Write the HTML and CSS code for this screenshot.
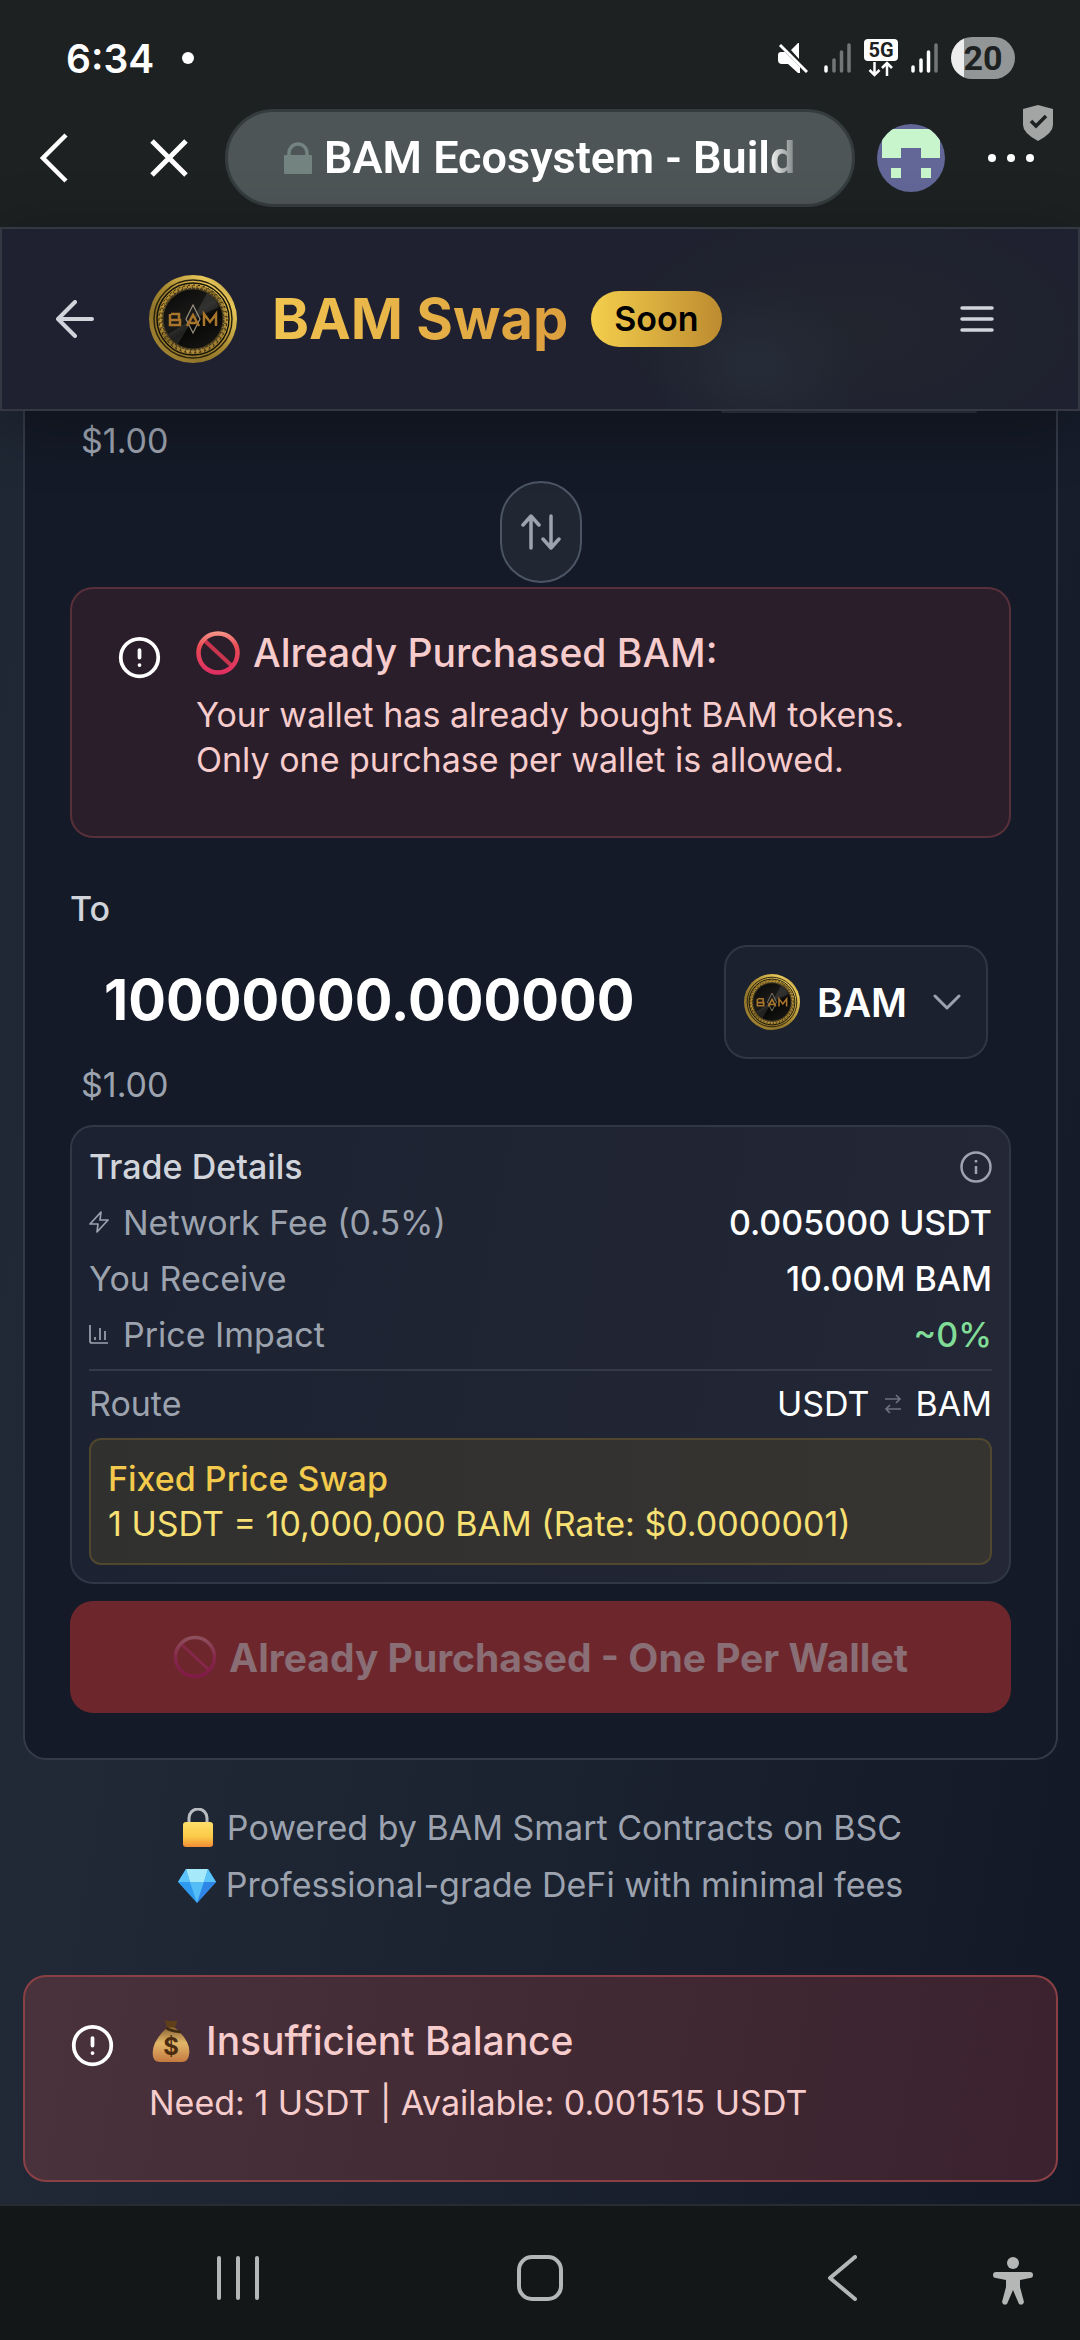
FILE: index.html
```html
<!DOCTYPE html>
<html lang="en">
<head>
<meta charset="utf-8">
<meta name="viewport" content="width=device-width, initial-scale=1">
<title>BAM Swap</title>
<link rel="stylesheet" href="styles.css">
</head>
<body>
<svg class="defs" aria-hidden="true">
  <defs>
    <linearGradient id="gold" x1="0" y1="0" x2="1" y2="1">
      <stop offset="0" stop-color="#9a7826"/><stop offset=".3" stop-color="#c79a35"/>
      <stop offset=".45" stop-color="#7d6420"/><stop offset=".7" stop-color="#b8913a"/><stop offset="1" stop-color="#8d6f24"/>
    </linearGradient>
    <linearGradient id="rim" x1="0" y1="1" x2="1" y2="0">
      <stop offset="0" stop-color="#b08f38"/><stop offset=".3" stop-color="#8f742a"/>
      <stop offset=".5" stop-color="#a5862f"/><stop offset=".8" stop-color="#e8c75a"/><stop offset="1" stop-color="#8c7028"/>
    </linearGradient>
    <linearGradient id="face" x1=".2" y1="0" x2=".8" y2="1">
      <stop offset="0" stop-color="#0a0a0a"/><stop offset=".45" stop-color="#1b1b1a"/>
      <stop offset=".6" stop-color="#080807"/><stop offset="1" stop-color="#161614"/>
    </linearGradient>
    <linearGradient id="ban" gradientUnits="userSpaceOnUse" x1="0" y1="0" x2="0" y2="44">
      <stop offset="0" stop-color="#f79a8c"/><stop offset=".35" stop-color="#ea4a55"/><stop offset="1" stop-color="#df2d63"/>
    </linearGradient>
    <linearGradient id="ban-dim" gradientUnits="userSpaceOnUse" x1="0" y1="0" x2="0" y2="44">
      <stop offset="0" stop-color="#8f5560"/><stop offset=".5" stop-color="#85284a"/><stop offset="1" stop-color="#801848"/>
    </linearGradient>
    <linearGradient id="lockbody" x1="0" y1="0" x2="0" y2="1">
      <stop offset="0" stop-color="#ffe06a"/><stop offset=".6" stop-color="#fbc947"/><stop offset="1" stop-color="#f08c34"/>
    </linearGradient>
    <linearGradient id="bag" x1="0" y1="0" x2="0" y2="1">
      <stop offset="0" stop-color="#8a6432"/><stop offset=".45" stop-color="#e2b669"/><stop offset="1" stop-color="#c47a40"/>
    </linearGradient>
    <symbol id="coin" viewBox="0 0 88 88">
      <circle cx="44" cy="44" r="44" fill="url(#rim)"/>
      <circle cx="44" cy="44" r="39" fill="none" stroke="#2b230d" stroke-width="1.500"/>
      <circle cx="44" cy="44" r="36" fill="none" stroke="#15120a" stroke-width="1.500"/>
      <circle cx="44" cy="44" r="34" fill="#4a3c18"/>
      <g fill="none">
        <circle cx="44" cy="44" r="33" stroke="url(#gold)" stroke-width="3" stroke-dasharray="4 1"/>
        <circle cx="44" cy="44" r="31" stroke="#b9ab86" stroke-width="1" stroke-dasharray="1 3"/>
        <circle cx="44" cy="44" r="34" stroke="#1d190d" stroke-width="1" stroke-dasharray="2 3"/>
      </g>
      <circle cx="44" cy="44" r="29.500" fill="url(#face)"/>
      <path d="M44 44 58 18A30 30 0 0 1 70 32ZM44 44 29 69A30 30 0 0 1 19 59Z" fill="#fff" opacity=".1"/>
      <path d="M44 30 51 44 44 58 37 44Z" fill="none" stroke="#9a9180" stroke-width="1.200"/>
      <g fill="none" stroke="#a8752a" stroke-width="2.500"><path d="M21 39V50H31V45H21M22 39H30V45M55 51V39L61 47 67 39V51M38 51 44 40 50 51M41 48H47"/></g>
    </symbol>
    <symbol id="warn" viewBox="0 0 24 24"><g fill="none" stroke="currentColor" stroke-width="2" stroke-linecap="round"><circle cx="12" cy="12" r="10"/><path d="M12 8V12M12 16H12.010"/></g></symbol>
  </defs>
</svg>

<header class="system">
  <div class="status">
    <span class="clock">6:34</span><span class="dot"></span>
    <div class="status-icons">
      <svg class="mute" viewBox="0 0 30 30"><path d="M0 12Q0 9 3 9H7L22 24V30H20L10 21H4Q0 21 0 17ZM13 7 20 0H21V16Z" fill="#fff"/><path d="M2 2 29 29" stroke="#fff" stroke-width="3"/></svg>
      <svg class="signal" viewBox="0 0 27 30"><g stroke="#fff" stroke-width="3.500" stroke-linecap="round"><path d="M2 24V28"/><path d="M10 17V28M17.500 9V28M25 2V28" opacity=".38"/></g></svg>
      <svg class="net" viewBox="0 0 34 38"><rect x="0" y="0" width="34" height="22" rx="4" fill="#fff"/><text x="17" y="18" text-anchor="middle" class="net-text">5G</text><path d="M10.500 23V35M5.500 31 10.500 36 15.500 31M23 37V25M18 29 23 24 28 29" fill="none" stroke="#fff" stroke-width="2.500"/></svg>
      <svg class="signal" viewBox="0 0 27 30"><g stroke="#fff" stroke-width="3.500" stroke-linecap="round"><path d="M2 24V28M10 17V28M17.500 9V28"/><path d="M25 2V28" opacity=".38"/></g></svg>
      <span class="battery">20</span>
    </div>
  </div>
  <nav class="browser" aria-label="Browser">
    <button class="icon-btn back" aria-label="Back"><svg width="28" height="50" viewBox="0 0 28 50"><path d="M26 2 3 25 26 48" fill="none" stroke="#fff" stroke-width="4.500"/></svg></button>
    <button class="icon-btn close" aria-label="Stop"><svg width="38" height="38" viewBox="0 0 38 38"><path d="M2 2 36 36M36 2 2 36" stroke="#fff" stroke-width="5"/></svg></button>
    <button class="address"><svg width="28" height="32" viewBox="0 0 28 32"><path d="M5 14V11A9 9 0 0 1 23 11V14" fill="none" stroke="#728380" stroke-width="3.500"/><rect y="13" width="28" height="19" rx="1" fill="#728380"/></svg><span class="site">BAM Ecosystem - Build</span></button>
    <button class="icon-btn avatar" aria-label="Account"><svg width="68" height="68" viewBox="0 0 68 68"><defs><clipPath id="round"><circle cx="34" cy="34" r="34"/></clipPath></defs><g clip-path="url(#round)"><path d="M0 0H68V68H0Z" fill="#626797"/><path d="M5 5H63V34H44V24H24V34H5ZM14 44H24V54H14ZM44 44H54V54H44Z" fill="#c8f5cb"/></g></svg></button>
    <button class="icon-btn more" aria-label="More"><svg width="48" height="10" viewBox="0 0 48 10"><g fill="#fff"><circle cx="5" cy="5" r="4"/><circle cx="24" cy="5" r="4"/><circle cx="43" cy="5" r="4"/></g></svg><svg class="shield" viewBox="0 0 30 36"><path d="M15 0 30 4V20Q30 28 15 36 0 28 0 20V4Z" fill="#a3a4a4"/><path d="M8 16 13 21 23 11" fill="none" stroke="#1d2122" stroke-width="3.500"/></svg></button>
  </nav>
</header>

<header class="app-bar">
  <button class="icon-btn" aria-label="Go back"><svg class="arrow" viewBox="0 0 38 38"><path d="M36 19H3M19 2 2 19 19 36" fill="none" stroke="#d1d5db" stroke-width="4" stroke-linecap="round" stroke-linejoin="round"/></svg></button>
  <svg class="logo"><use href="#coin"/></svg>
  <h1>BAM Swap</h1>
  <span class="badge">Soon</span>
  <button class="icon-btn menu" aria-label="Menu"><svg width="34" height="28" viewBox="0 0 34 28"><path d="M2 3H32M2 14H32M2 25H32" stroke="#d1d5db" stroke-width="3.500" stroke-linecap="round"/></svg></button>
</header>

<main>
  <section class="card">
    <div class="from-edge"></div>
    <p class="usd from-usd">$1.00</p>
    <button class="flip" aria-label="Switch tokens"><svg width="40" height="36" viewBox="0 0 40 36"><path d="M10 34V3M2 11 10 2 18 11M30 2V33M22 25 30 34 38 25" fill="none" stroke="#9ca3af" stroke-width="3.500" stroke-linecap="round" stroke-linejoin="round"/></svg></button>
    <div class="alert" role="alert">
      <svg class="warn"><use href="#warn"/></svg>
      <div>
        <h2><svg class="emoji" viewBox="0 0 44 44"><path d="M8 9 36 35" stroke="#c9354f" stroke-width="4"/><circle cx="22" cy="22" r="19.500" fill="none" stroke="url(#ban)" stroke-width="4.500"/></svg>Already Purchased BAM:</h2>
        <p>Your wallet has already bought BAM tokens. Only one purchase per wallet is allowed.</p>
      </div>
    </div>
    <label class="to" for="amount">To</label>
    <div class="amount-row">
      <input id="amount" value="10000000.000000" readonly>
      <button class="token"><svg class="coin-sm"><use href="#coin"/></svg>BAM<svg class="chev" viewBox="0 0 28 16"><path d="M2 2 14 14 26 2" fill="none" stroke="#9ca3af" stroke-width="3" stroke-linecap="round" stroke-linejoin="round"/></svg></button>
    </div>
    <p class="usd">$1.00</p>
    <div class="details">
      <div class="row head"><h3>Trade Details</h3><svg width="32" height="32" viewBox="0 0 32 32"><circle cx="16" cy="16" r="14.500" fill="none" stroke="#9ca3af" stroke-width="2.500"/><path d="M16 15V23M16 9V11.500" stroke="#9ca3af" stroke-width="2.500"/></svg></div>
      <div class="row"><span><svg class="mini" viewBox="0 0 20 22"><path d="M12 1 1 13H9L8 21 19 9H11Z" fill="none" stroke="#9ca3af" stroke-width="1.700" stroke-linejoin="round"/></svg>Network Fee (0.5%)</span><b>0.005000 USDT</b></div>
      <div class="row"><span>You Receive</span><b>10.00M BAM</b></div>
      <div class="row"><span><svg class="mini" viewBox="0 0 20 22"><path d="M1 2V18Q1 20 3 20H19M6 14V17M11 5V17M16 8V17" fill="none" stroke="#9ca3af" stroke-width="1.700"/></svg>Price Impact</span><b class="green">~0%</b></div>
      <div class="row route"><span>Route</span><span class="pair">USDT<svg width="18" height="20" viewBox="0 0 18 20"><path d="M1 5H16M12 1 16 5 12 9M17 15H2M6 11 2 15 6 19" fill="none" stroke="#6b7280" stroke-width="1.700"/></svg>BAM</span></div>
      <div class="rate"><strong>Fixed Price Swap</strong><p>1 USDT = 10,000,000 BAM (Rate: $0.0000001)</p></div>
    </div>
    <button class="buy" disabled><svg class="emoji" viewBox="0 0 44 44"><path d="M8 9 36 35" stroke="#85284a" stroke-width="3"/><circle cx="22" cy="22" r="19.500" fill="none" stroke="url(#ban-dim)" stroke-width="3.500"/></svg>Already Purchased - One Per Wallet</button>
  </section>

  <footer class="notes">
    <p><svg class="note-icon" viewBox="0 0 38 40"><path d="M10 16V10A9 9 0 0 1 28 10V16" fill="none" stroke="#b9bcc0" stroke-width="3"/><rect x="4" y="14" width="30" height="25" rx="3" fill="url(#lockbody)"/></svg>Powered by BAM Smart Contracts on BSC</p>
    <p><svg class="note-icon" viewBox="0 0 38 40"><path d="M8 4H30L38 17 19 38 0 17Z" fill="#2f9bf0"/><path d="M8 4 12 17H26L30 4 19 4Z" fill="#a5e9fb"/><path d="M0 17H12L8 4ZM26 17H38L30 4Z" fill="#5cc4f8"/><path d="M12 17H26L19 38Z" fill="#55bdf5"/><path d="M26 17H38L19 38Z" fill="#2f86e6"/></svg>Professional-grade DeFi with minimal fees</p>
  </footer>

  <div class="alert strong" role="alert">
    <svg class="warn"><use href="#warn"/></svg>
    <div>
      <h2><svg class="emoji" viewBox="0 0 44 48"><path d="M15 1Q22 4 29 1L26 11H18Z" fill="#604018"/><path d="M17 10Q22 8 27 10 43 24 42 37 41 47 34 47H10Q2 47 2 37 2 24 17 10Z" fill="url(#bag)"/><path d="M17 10Q24 14 33 14" fill="none" stroke="#3f2a12" stroke-width="3"/><text x="22" y="39" text-anchor="middle" class="bag-text">$</text></svg>Insufficient Balance</h2>
      <p>Need: 1 USDT | Available: 0.001515 USDT</p>
    </div>
  </div>
</main>

<nav class="system-nav" aria-label="System">
  <button class="icon-btn recents" aria-label="Recents"><svg width="42" height="44" viewBox="0 0 42 44"><path d="M2 2V42M21 2V42M40 2V42" stroke="#b5b7b7" stroke-width="4" stroke-linecap="round"/></svg></button>
  <button class="icon-btn" aria-label="Home"><svg width="46" height="46" viewBox="0 0 46 46"><rect x="2" y="2" width="42" height="42" rx="13" fill="none" stroke="#b5b7b7" stroke-width="4"/></svg></button>
  <button class="icon-btn" aria-label="Back"><svg width="30" height="46" viewBox="0 0 30 46"><path d="M28 2 3 23 28 44" fill="none" stroke="#b5b7b7" stroke-width="4" stroke-linecap="round" stroke-linejoin="round"/></svg></button>
  <button class="icon-btn access" aria-label="Accessibility"><svg width="40" height="48" viewBox="0 0 40 48"><g fill="#b5b7b7"><circle cx="20" cy="6" r="6"/><path d="M3 15H37Q40 15 40 18T37 21L27 23V30L31 45Q30 49 26 47L20 33 14 47Q10 49 9 45L13 30V23L3 21Q0 21 0 18T3 15Z"/></g></svg></button>
</nav>
</body>
</html>
```

FILE: styles.css
```css
* { box-sizing: border-box; }
body {
  margin: 0;
  min-height: 100vh;
  display: flex;
  flex-direction: column;
  background: #131718;
  color: #fff;
  font: 34px/45px Inter, "Liberation Sans", sans-serif;
  font-optical-sizing: none;
}
h1, h2, h3, p { margin: 0; font-size: inherit; font-weight: inherit; }
button, input { font: inherit; color: inherit; margin: 0; border: 0; padding: 0; background: none; }
svg { display: block; flex: none; }
.defs { position: absolute; width: 0; height: 0; }
.icon-btn { display: flex; align-items: center; justify-content: center; }

.system { background: #1d2122; padding: 0 27px 20px 40px; }
.status { display: flex; align-items: center; height: 109px; padding: 7px 38px 0 26px; }
.clock { font-size: 39px; font-weight: 600; }
.dot { width: 12px; height: 12px; border-radius: 6px; background: #fff; margin-left: 28px; }
.status-icons { display: flex; align-items: center; gap: 13px; margin-left: auto; }
.mute { width: 30px; height: 30px; margin-right: 3px; }
.signal { width: 27px; height: 30px; }
.net { width: 34px; height: 38px; }
.net-text { font: 700 20px Roboto, sans-serif; fill: #1d2122; }
.battery {
  width: 64px; height: 42px; border-radius: 21px; color: #1d2122;
  background: linear-gradient(90deg, #ededed 13px, #929696 13px);
  font: 700 34px/42px Roboto, sans-serif; text-align: center;
}
.browser { display: flex; align-items: center; height: 98px; }
.close { margin-left: 82px; }
.address {
  flex: 1; min-width: 0; height: 98px; margin: 0 22px 0 37px; padding: 0 56px;
  display: flex; align-items: center; gap: 12px;
  border: 3px solid #353c3e; border-radius: 49px; background: #4d5556;
}
.site {
  flex: 1; min-width: 0; overflow: hidden; white-space: nowrap; text-align: left;
  font: 600 45px/60px Roboto, sans-serif;
  -webkit-mask-image: linear-gradient(90deg, #000 94%, transparent 102%);
  mask-image: linear-gradient(90deg, #000 94%, transparent 102%);
}
.more { position: relative; width: 66px; height: 98px; margin-left: 42px; justify-content: flex-start; }
.shield { position: absolute; right: 0; top: -4px; width: 30px; height: 36px; }

.app-bar {
  position: relative; z-index: 1;
  display: flex; align-items: center; height: 184px; padding: 0 84px 0 54px;
  border: 2px solid #343843;
  background:
    radial-gradient(ellipse 110px 80px at 755px 135px, #252c38, transparent),
    radial-gradient(ellipse 260px 130px at 850px 100px, #22252e, transparent),
    #1f2130;
  box-shadow: 0 12px 60px rgba(0, 0, 0, .3);
}
.arrow { width: 38px; height: 38px; }
.logo { width: 88px; height: 88px; margin: 0 35px 0 55px; }
.app-bar h1 {
  font-size: 56px; line-height: 68px; font-weight: 700;
  background: linear-gradient(90deg, #f0c350, #dc9f3e); -webkit-background-clip: text; background-clip: text; color: transparent;
}
.badge {
  margin-left: 23px; padding: 5px 23px 6px; border-radius: 28px; color: #000; font-weight: 600;
  background: linear-gradient(90deg, #f4cf4c, #bd8b30);
}
.menu { margin-left: auto; }

main {
  flex: 1;
  display: flex; flex-direction: column; padding: 0 22px 22px 23px;
  background: linear-gradient(100deg, #1f2734 0%, #212936 20%, #1b2230 55%, #121826 100%);
}
.card {
  display: flex; flex-direction: column; padding: 0 45px;
  border: 2px solid #343b48; border-top: 0; border-radius: 0 0 23px 23px;
  background: #141a27;
}
.from-edge { align-self: flex-end; width: 256px; height: 2px; margin-right: 34px; border-radius: 0 0 20px 20px; background: #2c333f; }
.usd { padding-left: 11px; color: #9ca3af; }
.from-usd { padding-top: 5px; }
.flip {
  align-self: center; display: flex; align-items: center; justify-content: center;
  width: 82px; height: 102px; margin: 18px 0 4px; border: 2px solid #4b5563; border-radius: 41px; background: #202733;
}
.alert {
  display: flex; gap: 34px; padding: 41px 45px 54px;
  border: 2px solid #58303a; border-radius: 23px; background: #2b1e2b; color: #f7cccc;
}
.warn { width: 45px; height: 45px; margin-top: 5px; color: #fff; }
.alert h2 { display: flex; align-items: center; gap: 13px; font-size: 39px; font-weight: 500; margin-bottom: 17px; }
.emoji { width: 44px; height: 44px; }
.to { margin-top: 48px; color: #d1d5db; font-weight: 500; }
.amount-row { display: flex; align-items: center; margin: 14px 23px 3px 0; }
#amount { flex: 1; min-width: 0; padding: 0 0 4px 34px; font-size: 56px; line-height: 68px; font-weight: 700; outline: 0; }
.token {
  display: flex; align-items: center; width: 264px; height: 114px; padding: 0 25px 0 18px;
  border: 2px solid #303743; border-radius: 23px; background: #1b212e; font-size: 39px; font-weight: 600;
}
.coin-sm { width: 56px; height: 56px; margin-right: 17px; }
.chev { width: 28px; height: 16px; margin-left: auto; }
.details {
  margin-top: 18px; padding: 17px; border: 2px solid #303745; border-radius: 23px;
  background: linear-gradient(100deg, #1c2231, #232736);
}
.row { display: flex; justify-content: space-between; align-items: center; height: 56px; color: #9ca3af; }
.row > span { display: flex; align-items: center; gap: 14px; }
.row h3 { color: #d1d5db; font-weight: 500; }
.head { height: 45px; margin-bottom: 5px; }
.row b { font-weight: 500; color: #fff; }
.row .green { color: #80dc96; }
.mini { width: 20px; height: 22px; }
.route { height: 69px; margin-top: 7px; padding: 10px 0 12px; border-top: 2px solid #343a48; }
.row .pair { color: #fff; }
.rate { padding: 16px 17px 17px; border: 2px solid #51472f; border-radius: 12px; background: linear-gradient(90deg, #30302f, #363431); color: #f8e073; }
.rate strong { display: block; font-weight: 500; color: #f3ca4c; }
.buy {
  display: flex; align-items: center; justify-content: center; gap: 12px; height: 112px; margin: 17px 0 45px;
  border-radius: 23px; background: #6d272c; color: #8a6e75; font-size: 39px; font-weight: 700;
}
.notes { margin: 45px 0 68px; color: #9ca3af; }
.notes p { display: flex; align-items: center; justify-content: center; gap: 10px; height: 45px; margin-bottom: 12px; }
.notes p:last-child { margin-bottom: 0; }
.note-icon { width: 38px; height: 40px; }
.bag-text { font: 700 26px Inter, sans-serif; fill: #4a2c10; }
.strong { min-height: 207px; border-color: #8a4045; background: linear-gradient(100deg, #49323b, #3b222e); }

.system-nav {
  display: grid; grid-template-columns: 87px repeat(3, 1fr) 87px; align-items: center;
  height: 136px; padding-top: 10px;
  border-top: 2px solid #262c30; background: #131718;
}
.recents { grid-column: 2; }
.access { justify-self: start; padding-top: 6px; }
```
